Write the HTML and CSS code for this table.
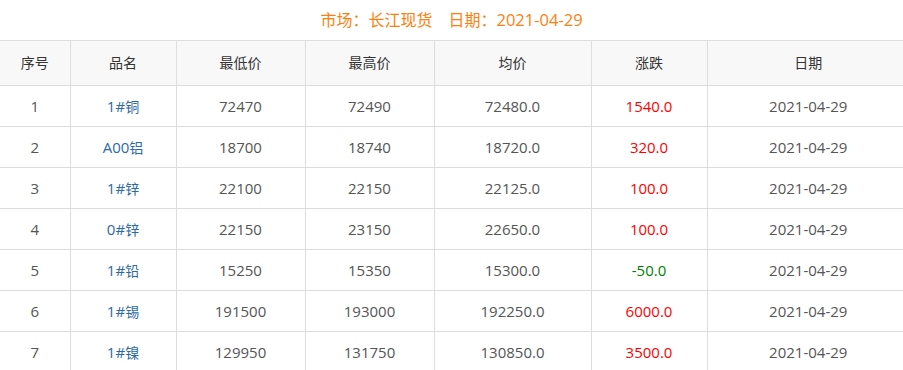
FILE: index.html
```html
<!DOCTYPE html>
<html lang="zh-CN">
<head>
<meta charset="utf-8">
<title>长江现货</title>
<link rel="stylesheet" href="styles.css">
</head>
<body>
<div class="title">市场：长江现货<span class="gap"></span>日期：<span class="num">2021-04-29</span></div>
<div class="table-wrap">
<table class="price-table">
  <colgroup>
    <col class="c1"><col class="c2"><col class="c3"><col class="c4"><col class="c5"><col class="c6"><col class="c7">
  </colgroup>
  <thead>
    <tr><th>序号</th><th>品名</th><th>最低价</th><th>最高价</th><th>均价</th><th>涨跌</th><th>日期</th></tr>
  </thead>
  <tbody>
    <tr><td>1</td><td class="name">1#<span class="cjk">铜</span></td><td>72470</td><td>72490</td><td>72480.0</td><td class="up">1540.0</td><td>2021-04-29</td></tr>
    <tr><td>2</td><td class="name">A00<span class="cjk">铝</span></td><td>18700</td><td>18740</td><td>18720.0</td><td class="up">320.0</td><td>2021-04-29</td></tr>
    <tr><td>3</td><td class="name">1#<span class="cjk">锌</span></td><td>22100</td><td>22150</td><td>22125.0</td><td class="up">100.0</td><td>2021-04-29</td></tr>
    <tr><td>4</td><td class="name">0#<span class="cjk">锌</span></td><td>22150</td><td>23150</td><td>22650.0</td><td class="up">100.0</td><td>2021-04-29</td></tr>
    <tr><td>5</td><td class="name">1#<span class="cjk">铅</span></td><td>15250</td><td>15350</td><td>15300.0</td><td class="down">-50.0</td><td>2021-04-29</td></tr>
    <tr><td>6</td><td class="name">1#<span class="cjk">锡</span></td><td>191500</td><td>193000</td><td>192250.0</td><td class="up">6000.0</td><td>2021-04-29</td></tr>
    <tr><td>7</td><td class="name">1#<span class="cjk">镍</span></td><td>129950</td><td>131750</td><td>130850.0</td><td class="up">3500.0</td><td>2021-04-29</td></tr>
  </tbody>
</table>
</div>
</body>
</html>
```
FILE: styles.css
```css
html, body {
  margin: 0;
  padding: 0;
  background: #fff;
}
body {
  font-family: "Open Sans", "Noto Sans CJK SC", sans-serif;
  color: #555;
}
.title {
  height: 40px;
  line-height: 40px;
  text-align: center;
  font-size: 16px;
  color: #ff7f0e;
}
.title .num {
  font-size: 16.5px;
}
.gap {
  display: inline-block;
  width: 16px;
}
.table-wrap {
  width: 903px;
  overflow: hidden;
}
.price-table {
  width: 909px;
  table-layout: fixed;
  border-collapse: collapse;
  font-size: 14px;
}
.c1 { width: 70px; }
.c2 { width: 106px; }
.c3 { width: 129px; }
.c4 { width: 129px; }
.c5 { width: 157px; }
.c6 { width: 116px; }
.c7 { width: 202px; }
.price-table th,
.price-table td {
  border: 1px solid #ddd;
  padding: 0;
  text-align: center;
  font-weight: normal;
}
.price-table th:first-child,
.price-table td:first-child { border-left: none; }
.price-table th:last-child,
.price-table td:last-child { border-right: none; }
.price-table th {
  height: 42px;
  background: #f8f8f8;
  color: #333;
  padding-bottom: 2px;
}
.price-table td {
  height: 40px;
  font-size: 15px;
}
.price-table .cjk {
  font-size: 14px;
}
.price-table .name { color: #2b6aa3; }
.price-table .up { color: #ff0000; }
.price-table .down { color: #008000; }
```
